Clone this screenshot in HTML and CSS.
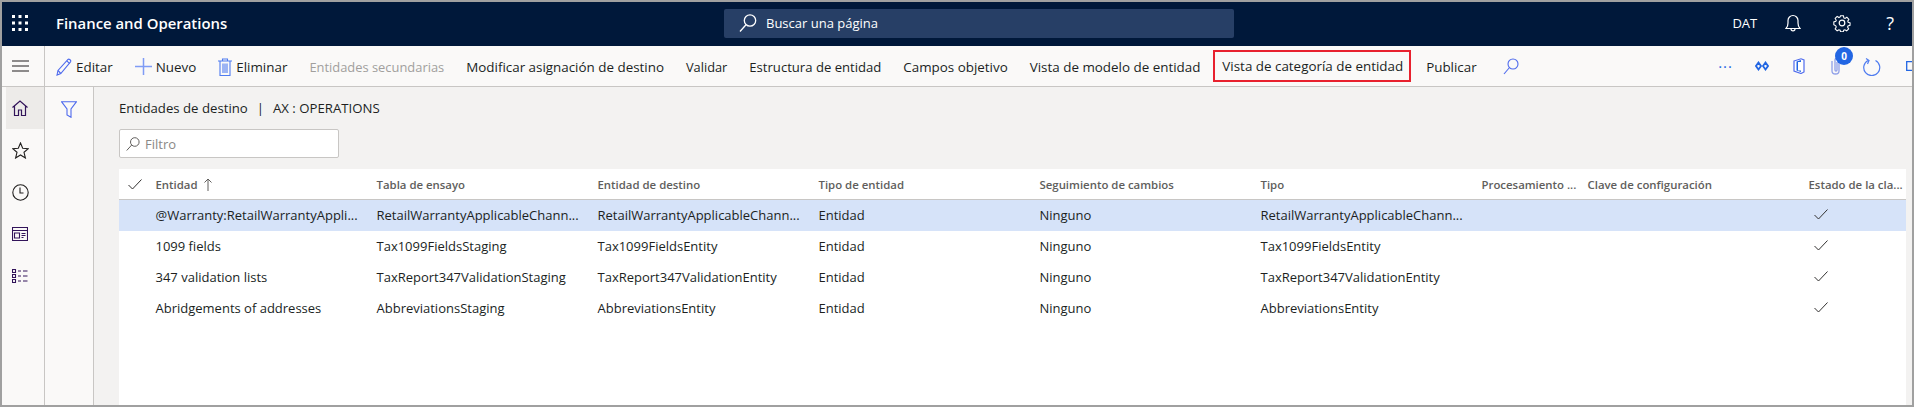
FILE: index.html
```html
<!DOCTYPE html>
<html lang="es">
<head>
    <meta charset="UTF-8">
    <meta name="viewport" content="width=device-width, initial-scale=1.0">
    <title>Finance and Operations</title>
    <link rel="stylesheet" href="styles.css">
</head>
<body>
    <div class="window">
        <!-- barra superior -->
        <div class="topbar">
            <svg class="waffle" width="16" height="16" viewBox="0 0 16 16" fill="#fff">
                <rect x="0" y="0" width="3" height="3"/><rect x="6.5" y="0" width="3" height="3"/><rect x="13" y="0" width="3" height="3"/>
                <rect x="0" y="6.5" width="3" height="3"/><rect x="6.5" y="6.5" width="3" height="3"/><rect x="13" y="6.5" width="3" height="3"/>
                <rect x="0" y="13" width="3" height="3"/><rect x="6.5" y="13" width="3" height="3"/><rect x="13" y="13" width="3" height="3"/>
            </svg>
            <div class="app-title">Finance and Operations</div>
            <div class="search-box">
                <svg width="18" height="20" viewBox="0 0 18 20" fill="none" stroke="#fff" stroke-width="1.3">
                    <circle cx="11" cy="7.5" r="5.7"/><path d="M7 11.7 1 18.5"/>
                </svg>
                <span>Buscar una página</span>
            </div>
            <div class="top-right">
                <span class="company">DAT</span>
                <svg class="bell" width="16" height="18" viewBox="0 0 16 18" fill="none" stroke="#fff" stroke-width="1.2">
                    <path d="M1 14.5h14c-1.500-1.500-2-3-2-5.500V6.500a5 5 0 0 0-10 0V9c0 2.500-.5 4-2 5.500Z"/><path d="M6 15c0 2.500 4 2.500 4 0"/>
                </svg>
                <svg class="gear" width="18" height="18" viewBox="0 0 18 18" fill="none" stroke="#fff" stroke-width="1.2">
                    <circle cx="9" cy="9" r="2.800"/>
                    <path d="M7.400 1h3.200l.5 2.300 1.300.6 2-1.300 2.200 2.300-1.200 2 .5 1.300 2.100.6v0l-.1 2.800-2.200.6-.5 1.300 1.200 2-2.200 2.200-2-1.200-1.300.5-.5 1.800H7.400l-.5-1.800-1.300-.5-2 1.200-2.200-2.200 1.200-2-.5-1.300L-.1 11V7.800L2.100 7.200l.5-1.300-1.200-2 2.200-2.300 2 1.300 1.300-.6Z" transform="translate(.9 .9) scale(.9)"/>
                </svg>
                <span class="help">?</span>
            </div>
        </div>

        <!-- barra de acciones -->
        <div class="actionbar">
            <div class="burger">
                <svg width="17" height="12" viewBox="0 0 17 12" stroke="#201f1e" stroke-width="1.200"><path d="M0 1h17M0 6h17M0 11h17"/></svg>
            </div>
            <div class="action">
                <svg width="16" height="18" viewBox="0 0 16 18" fill="none" stroke="#4f6bed" stroke-width="1.100">
                    <path d="M1 17l1-4.500L12 1.500c1-1 3.500 1 2.500 2.300L4.800 15.500 1 17Z"/><path d="M2 12.500l2.800 3M10.800 3l2.800 2.400"/>
                </svg>
                <span>Editar</span>
            </div>
            <div class="action">
                <svg width="17" height="17" viewBox="0 0 17 17" stroke="#7f9cf5" stroke-width="1.500"><path d="M8.500 0v17M0 8.500h17"/></svg>
                <span>Nuevo</span>
            </div>
            <div class="action">
                <svg width="14" height="18" viewBox="0 0 14 18" fill="none" stroke="#4f7cf0" stroke-width="1.100">
                    <path d="M0 3h14M4.500 3V1h5v2M2 3v14.500h10V3M5 5.500v9.500M7 5.500v9.500M9 5.500v9.500"/>
                </svg>
                <span>Eliminar</span>
            </div>
            <div class="action disabled"><span>Entidades secundarias</span></div>
            <div class="action"><span>Modificar asignación de destino</span></div>
            <div class="action short"><span>Validar</span></div>
            <div class="action narrow"><span>Estructura de entidad</span></div>
            <div class="action"><span>Campos objetivo</span></div>
            <div class="action"><span>Vista de modelo de entidad</span></div>
            <div class="action highlighted"><span>Vista de categoría de entidad</span></div>
            <div class="action"><span>Publicar</span></div>
            <svg class="action-search" width="16" height="17" viewBox="0 0 16 17" fill="none" stroke="#4f6bed" stroke-width="1.100">
                <circle cx="10" cy="6" r="5"/><path d="M6.500 9.500 1 16"/>
            </svg>
            <div class="action-icons">
                <span class="more">···</span>
                <svg class="i-diamonds" width="14" height="10" viewBox="0 0 14 10" fill="none" stroke="#2266e3" stroke-width="1.800">
                    <path d="M3.500 1.500 6 5 3.500 8.500 1 5ZM10.500 1.500 13 5 10.500 8.500 8 5Z"/>
                </svg>
                <svg class="i-office" width="12" height="16" viewBox="0 0 12 16">
                    <path d="M1 3 8 .8 11 2v12l-3 1.500L1 13Z" fill="#fff" stroke="#4f6bed" stroke-width="1.200"/><path d="M3.500 3.500 8 2v12l-4.500-1.500Z" fill="#2266e3"/><path d="M5 4h3v8.500H5Z" fill="#fff"/>
                </svg>
                <div class="clip">
                    <svg width="10" height="18" viewBox="0 0 10 18" fill="none" stroke="#8f9fe8" stroke-width="1.300">
                        <path d="M1 4v10c0 4 7 4 7 0V3c0-2.500-4-2.500-4 0v10c0 1.500 2 1.500 2 0V5"/>
                    </svg>
                    <span class="badge">0</span>
                </div>
                <svg class="i-refresh" width="18" height="19" viewBox="0 0 18 19" fill="none" stroke="#4f7cf0" stroke-width="1.200">
                    <path d="M12.500 3.500a8 8 0 1 1-7.500 0"/><path d="M3 1.500 6 3.500 4.500 7"/>
                </svg>
                <svg class="i-square" width="6" height="10" viewBox="0 0 6 10" fill="none" stroke="#2266e3" stroke-width="1.300"><path d="M6 .7H.7v8.600H6"/></svg>
            </div>
        </div>

        <div class="content">
            <!-- navegacion lateral -->
            <div class="navbar">
                <div class="nav-item active">
                    <svg width="16" height="16" viewBox="0 0 16 16" fill="none" stroke="#32145a" stroke-width="1.200">
                        <path d="M.5 7.500 8 1l7.500 6.500M2.500 6v9.500h4V10h3v5.500h4V6"/>
                    </svg>
                </div>
                <div class="nav-item">
                    <svg width="17" height="17" viewBox="0 0 17 17" fill="none" stroke="#201f1e" stroke-width="1.100">
                        <path d="M8.500 1 10.700 6.300 16.300 6.700 12 10.300 13.400 16 8.500 13 3.600 16 5 10.300.7 6.700 6.300 6.300Z"/>
                    </svg>
                </div>
                <div class="nav-item">
                    <svg width="17" height="17" viewBox="0 0 17 17" fill="none" stroke="#201f1e" stroke-width="1.100">
                        <circle cx="8.500" cy="8.500" r="7.700"/><path d="M8 3.500V9h3.500"/>
                    </svg>
                </div>
                <div class="nav-item">
                    <svg width="16" height="14" viewBox="0 0 16 14" fill="none" stroke="#32145a" stroke-width="1.100">
                        <path d="M.5.5h15v13H.5ZM.5 3.500h15M2.500 6h5v5h-5ZM9.500 6.500h4M9.500 8.500h4M9.500 10.500h2"/>
                    </svg>
                </div>
                <div class="nav-item">
                    <svg width="16" height="14" viewBox="0 0 16 14" fill="none" stroke="#32145a" stroke-width="1.100">
                        <path d="M.5.5h3v3h-3ZM.5 5.500h3v3h-3ZM.5 10.500h3v3h-3ZM6 2h3M11 2h4.500M6 7h3M11 7h4.500M6 12h3M11 12h4.500"/>
                    </svg>
                </div>
            </div>

            <div class="filter-pane">
                <svg width="16" height="17" viewBox="0 0 16 17" fill="none" stroke="#4f6bed" stroke-width="1.100">
                    <path d="M.5.7h15L10 8v8.300L6 14V8Z"/>
                </svg>
            </div>

            <div class="main">
                <div class="breadcrumb">
                    <span>Entidades de destino</span><span class="sep">|</span><span>AX : OPERATIONS</span>
                </div>
                <div class="filter-box">
                    <svg width="14" height="14" viewBox="0 0 14 14" fill="none" stroke="#605e5c" stroke-width="1">
                        <circle cx="8.800" cy="5" r="4.300"/><path d="M5.700 8 .7 13.500"/>
                    </svg>
                    <span>Filtro</span>
                </div>

                <div class="grid">
                    <div class="row head">
                        <div class="cell check">
                            <svg width="14" height="11" viewBox="0 0 14 11" fill="none" stroke="#323130" stroke-width="1"><path d="M.5 6 4.500 10 13.500.5"/></svg>
                        </div>
                        <div class="cell">Entidad
                            <svg width="8" height="13" viewBox="0 0 8 13" fill="none" stroke="#605e5c" stroke-width="1"><path d="M4 13V1M.5 4.500 4 1l3.500 3.500"/></svg>
                        </div>
                        <div class="cell">Tabla de ensayo</div>
                        <div class="cell">Entidad de destino</div>
                        <div class="cell">Tipo de entidad</div>
                        <div class="cell">Seguimiento de cambios</div>
                        <div class="cell">Tipo</div>
                        <div class="cell">Procesamiento ...</div>
                        <div class="cell">Clave de configuración</div>
                        <div class="cell">Estado de la cla...</div>
                    </div>

                    <div class="row selected">
                        <div class="cell check"></div>
                        <div class="cell">@Warranty:RetailWarrantyAppli...</div>
                        <div class="cell">RetailWarrantyApplicableChann...</div>
                        <div class="cell">RetailWarrantyApplicableChann...</div>
                        <div class="cell">Entidad</div>
                        <div class="cell">Ninguno</div>
                        <div class="cell">RetailWarrantyApplicableChann...</div>
                        <div class="cell"></div>
                        <div class="cell"></div>
                        <div class="cell state"><svg width="14" height="11" viewBox="0 0 14 11" fill="none" stroke="#323130" stroke-width="1"><path d="M.5 6 4.500 10 13.500.5"/></svg></div>
                    </div>
                    <div class="row">
                        <div class="cell check"></div>
                        <div class="cell">1099 fields</div>
                        <div class="cell">Tax1099FieldsStaging</div>
                        <div class="cell">Tax1099FieldsEntity</div>
                        <div class="cell">Entidad</div>
                        <div class="cell">Ninguno</div>
                        <div class="cell">Tax1099FieldsEntity</div>
                        <div class="cell"></div>
                        <div class="cell"></div>
                        <div class="cell state"><svg width="14" height="11" viewBox="0 0 14 11" fill="none" stroke="#323130" stroke-width="1"><path d="M.5 6 4.500 10 13.500.5"/></svg></div>
                    </div>
                    <div class="row">
                        <div class="cell check"></div>
                        <div class="cell">347 validation lists</div>
                        <div class="cell">TaxReport347ValidationStaging</div>
                        <div class="cell">TaxReport347ValidationEntity</div>
                        <div class="cell">Entidad</div>
                        <div class="cell">Ninguno</div>
                        <div class="cell">TaxReport347ValidationEntity</div>
                        <div class="cell"></div>
                        <div class="cell"></div>
                        <div class="cell state"><svg width="14" height="11" viewBox="0 0 14 11" fill="none" stroke="#323130" stroke-width="1"><path d="M.5 6 4.500 10 13.500.5"/></svg></div>
                    </div>
                    <div class="row">
                        <div class="cell check"></div>
                        <div class="cell">Abridgements of addresses</div>
                        <div class="cell">AbbreviationsStaging</div>
                        <div class="cell">AbbreviationsEntity</div>
                        <div class="cell">Entidad</div>
                        <div class="cell">Ninguno</div>
                        <div class="cell">AbbreviationsEntity</div>
                        <div class="cell"></div>
                        <div class="cell"></div>
                        <div class="cell state"><svg width="14" height="11" viewBox="0 0 14 11" fill="none" stroke="#323130" stroke-width="1"><path d="M.5 6 4.500 10 13.500.5"/></svg></div>
                    </div>
                </div>
            </div>
        </div>
    </div>
</body>
</html>
```

FILE: styles.css
```css
html, body {
    margin: 0;
    height: 100%;
    overflow: hidden;
}
body {
    background-color: #a0a0a0;
    font-family: "Open Sans", "Noto Sans", sans-serif;
    font-size: 13px;
    color: #201f1e;
}
svg {
    display: block;
    flex: none;
}
.window {
    margin: 2px;
    height: 403px;
    display: flex;
    flex-direction: column;
    overflow: hidden;
}

/* barra superior */
.topbar {
    height: 44px;
    flex: none;
    box-sizing: border-box;
    padding-bottom: 2px;
    background-color: #00183a;
    color: white;
    display: flex;
    align-items: center;
}
.waffle {
    margin-left: 10px;
}
.app-title {
    margin-left: 28px;
    width: 668px;
    font-size: 14.9px;
    font-weight: 600;
}
.search-box {
    width: 510px;
    height: 29px;
    background-color: #273f66;
    border-radius: 2px;
    display: flex;
    align-items: center;
    gap: 9px;
    padding-left: 15px;
    box-sizing: border-box;
    font-size: 13px;
}
.top-right {
    flex: 1;
    display: flex;
    align-items: center;
    justify-content: flex-end;
}
.bell {
    margin-left: 28px;
}
.gear {
    margin-left: 32px;
}
.help {
    margin-left: 35px;
    margin-right: 18px;
    font-size: 18px;
}

/* barra de acciones */
.actionbar {
    height: 40px;
    flex: none;
    background-color: #faf9f8;
    border-bottom: 1px solid #c8c6c4;
    display: flex;
    align-items: center;
    font-size: 13.4px;
}
.burger {
    width: 36px;
    height: 40px;
    padding-right: 6px;
    border-right: 1px solid #c8c6c4;
    display: flex;
    align-items: center;
    justify-content: center;
    flex: none;
}
.action {
    display: flex;
    align-items: center;
    gap: 4px;
    padding: 1px 11px 0;
    height: 32px;
    box-sizing: border-box;
    white-space: nowrap;
}
.action.disabled {
    color: #a19f9d;
    font-size: 12.9px;
}
.action.short {
    font-size: 12.8px;
}
.action.narrow {
    font-size: 13.1px;
}
.action.highlighted {
    border: 2px solid #e8212e;
    padding: 0 6px 0 7px;
    margin: 0 4px 0 2px;
}
.action-search {
    margin-left: 15.5px;
}
.action-icons {
    flex: 1;
    display: flex;
    align-items: center;
    justify-content: flex-end;
}
.more {
    color: #2266e3;
    font-size: 15px;
    letter-spacing: 1px;
}
.i-diamonds {
    margin-left: 22px;
}
.i-office {
    margin-left: 24px;
}
.clip {
    position: relative;
    margin-left: 26px;
}
.badge {
    position: absolute;
    left: 4px;
    top: -10px;
    width: 18px;
    height: 18px;
    line-height: 18px;
    border-radius: 50%;
    background-color: #2266e3;
    color: white;
    font-size: 10px;
    font-weight: 700;
    text-align: center;
}
.i-refresh {
    margin-left: 22px;
}
.i-square {
    margin-left: 25px;
}

/* contenido */
.content {
    flex: 1;
    display: flex;
    min-height: 0;
}
.navbar {
    width: 42px;
    flex: none;
    background-color: #faf9f8;
    border-right: 1px solid #c8c6c4;
}
.nav-item {
    height: 42px;
    padding-right: 6px;
    display: flex;
    align-items: center;
    justify-content: center;
}
.nav-item.active {
    background-color: #edebe9;
    margin-left: 4px;
    padding-right: 10px;
}
.filter-pane {
    width: 48px;
    flex: none;
    background-color: #faf9f8;
    border-right: 1px solid #c8c6c4;
    display: flex;
    justify-content: center;
    padding-top: 14px;
}
.main {
    flex: 1;
    min-width: 0;
    background-color: #f3f2f1;
    padding: 0 6px 0 25px;
    display: flex;
    flex-direction: column;
}
.breadcrumb {
    height: 42px;
    flex: none;
    display: flex;
    align-items: center;
    font-size: 13.2px;
}
.sep {
    margin: 0 9px;
}
.filter-box {
    width: 220px;
    height: 29px;
    flex: none;
    box-sizing: border-box;
    background-color: white;
    border: 1px solid #c8c6c4;
    border-radius: 2px;
    display: flex;
    align-items: center;
    gap: 5px;
    padding-left: 6px;
    color: #8a8886;
}

/* tabla */
.grid {
    flex: 1;
    margin-top: 11px;
    background-color: white;
}
.row {
    display: grid;
    grid-template-columns: 36.5px repeat(6, 221px) 106px 221px 1fr;
    height: 31px;
    box-sizing: border-box;
    padding-bottom: 2px;
    align-items: center;
    white-space: nowrap;
}
.row.head {
    padding-bottom: 0;
    border-bottom: 1px solid #c8c6c4;
    font-size: 11.4px;
    font-weight: 600;
    color: #605e5c;
}
.row.selected {
    background-color: #d6e3f9;
}
.cell {
    display: flex;
    align-items: center;
    gap: 6px;
    min-width: 0;
}
.cell.check {
    padding-left: 9px;
}
.cell.state {
    padding-left: 5px;
}
```
